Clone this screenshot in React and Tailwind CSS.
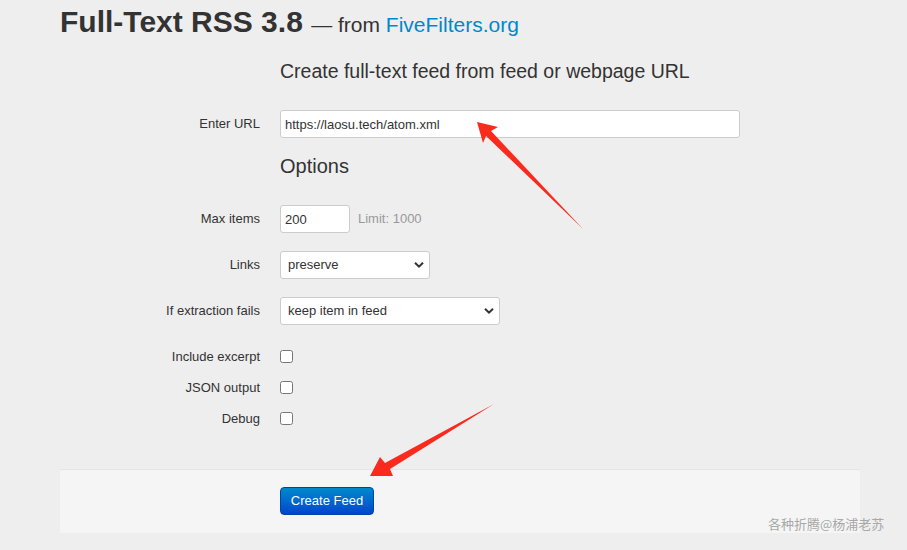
import React from 'react';

const Chevron = () => (
  <svg className="pointer-events-none absolute right-[6px] top-1/2 -translate-y-1/2" width="10" height="7" viewBox="0 0 10 7">
    <path d="M1 1.2 L5 5.2 L9 1.2" fill="none" stroke="#333" strokeWidth="2" />
  </svg>
);

function Row({ label, children, top }) {
  return (
    <div className={`flex items-center ${top}`}>
      <label className="w-[200px] text-right text-[13px] text-[#333]">{label}</label>
      <div className="ml-[20px] flex items-center">{children}</div>
    </div>
  );
}

function CheckRow({ label }) {
  return (
    <div className="flex h-[31px] items-center">
      <label className="w-[200px] text-right text-[13px] text-[#333]">{label}</label>
      <input type="checkbox" className="ml-[20px] h-[13px] w-[13px] m-0" />
    </div>
  );
}

export default function App() {
  return (
    <div className="relative min-h-[550px] w-[907px] overflow-hidden bg-[#eeeeee] font-['Liberation_Sans',Arial,sans-serif] text-[#333]">
      <div className="ml-[60px] w-[800px]">
        {/* Header */}
        <h1 className="h-[44px] pt-[4px] text-[30px] font-bold leading-[36px] text-[#333]">
          Full-Text RSS 3.8{' '}
          <span className="text-[21px] font-normal">
            — from <a href="#" className="text-[#0088cc]">FiveFilters.org</a>
          </span>
        </h1>

        <form>
          <div className="ml-[220px] mt-[15px] h-[24px] text-[19.5px] leading-[24px]">
            Create full-text feed from feed or webpage URL
          </div>

          <Row label="Enter URL" top="mt-[27px]">
            <input
              type="text"
              defaultValue="https://laosu.tech/atom.xml"
              className="h-[28px] w-[460px] rounded-[3px] border border-[#cccccc] bg-white px-[4px] text-[13px] text-[#333] outline-none"
            />
          </Row>

          <div className="ml-[220px] mt-[16px] h-[24px] text-[20px] leading-[24px]">Options</div>

          <Row label="Max items" top="mt-[27px]">
            <input
              type="text"
              defaultValue="200"
              className="h-[28px] w-[70px] rounded-[3px] border border-[#cccccc] bg-white px-[4px] text-[13px] text-[#333] outline-none"
            />
            <span className="ml-[8px] text-[13px] text-[#999999]">Limit: 1000</span>
          </Row>

          <Row label="Links" top="mt-[18px]">
            <div className="relative">
              <select className="h-[28px] w-[150px] appearance-none rounded-[3px] border border-[#cccccc] bg-white pl-[7px] text-[13px] text-[#333] outline-none">
                <option>preserve</option>
              </select>
              <Chevron />
            </div>
          </Row>

          <Row label="If extraction fails" top="mt-[18px]">
            <div className="relative">
              <select className="h-[28px] w-[220px] appearance-none rounded-[3px] border border-[#cccccc] bg-white pl-[7px] text-[13px] text-[#333] outline-none">
                <option>keep item in feed</option>
              </select>
              <Chevron />
            </div>
          </Row>

          <div className="mt-[16px]">
            <CheckRow label="Include excerpt" />
            <CheckRow label="JSON output" />
            <CheckRow label="Debug" />
          </div>

          {/* Form actions */}
          <div className="mt-[35px] h-[64px] border-t border-[#e5e5e5] bg-[#f5f5f5] pl-[220px] pt-[17px]">
            <button
              type="button"
              className="h-[28px] w-[94px] rounded-[4px] border border-[#0044aa] bg-gradient-to-b from-[#0088cc] to-[#0044cc] text-[13px] text-white"
            >
              Create Feed
            </button>
          </div>
        </form>
      </div>

      {/* watermark */}
      <div className="absolute left-[768px] top-[514px] text-[13px] text-[#a8a8a8] font-['Noto_Sans_CJK_SC',sans-serif]">
        各种折腾@杨浦老苏
      </div>

      {/* annotation arrows */}
      <svg className="pointer-events-none absolute left-0 top-0" width="907" height="550">
        <polygon points="477,122 498,127 491,131 583,229 486,136 483,143" fill="#fa2a1d" />
        <polygon points="370,476 380,457 385,463 494,404 390,469 393,476" fill="#fa2a1d" />
      </svg>
    </div>
  );
}
